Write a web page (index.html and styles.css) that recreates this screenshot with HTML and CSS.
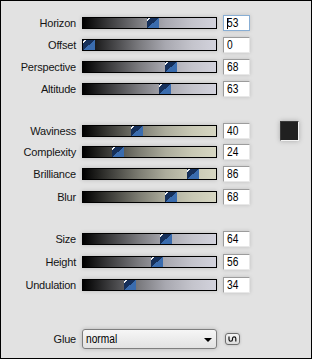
FILE: index.html
```html
<!DOCTYPE html>
<html>
<head>
<meta charset="utf-8">
<link rel="stylesheet" href="styles.css">
</head>
<body>
<div class="panel">
  <div class="group g1">
    <div class="row">
      <span class="lbl">Horizon</span>
      <div class="bar cool"><span class="thumb" style="left:64px"></span></div>
      <div class="field focus"><span class="caret"></span><span class="num">53</span></div>
    </div>
    <div class="row">
      <span class="lbl">Offset</span>
      <div class="bar cool"><span class="thumb" style="left:0px"></span></div>
      <div class="field"><span class="num">0</span></div>
    </div>
    <div class="row">
      <span class="lbl">Perspective</span>
      <div class="bar cool"><span class="thumb" style="left:82px"></span></div>
      <div class="field"><span class="num">68</span></div>
    </div>
    <div class="row">
      <span class="lbl">Altitude</span>
      <div class="bar cool"><span class="thumb" style="left:76px"></span></div>
      <div class="field"><span class="num">63</span></div>
    </div>
  </div>

  <div class="group g2">
    <div class="row">
      <span class="lbl">Waviness</span>
      <div class="bar warm"><span class="thumb" style="left:48px"></span></div>
      <div class="field"><span class="num">40</span></div>
      <div class="swatch"></div>
    </div>
    <div class="row">
      <span class="lbl">Complexity</span>
      <div class="bar warm"><span class="thumb" style="left:29px"></span></div>
      <div class="field"><span class="num">24</span></div>
    </div>
    <div class="row">
      <span class="lbl">Brilliance</span>
      <div class="bar warm"><span class="thumb" style="left:104px"></span></div>
      <div class="field"><span class="num">86</span></div>
    </div>
    <div class="row">
      <span class="lbl">Blur</span>
      <div class="bar warm"><span class="thumb" style="left:82px"></span></div>
      <div class="field"><span class="num">68</span></div>
    </div>
  </div>

  <div class="group g3">
    <div class="row">
      <span class="lbl">Size</span>
      <div class="bar cool"><span class="thumb" style="left:77px"></span></div>
      <div class="field"><span class="num">64</span></div>
    </div>
    <div class="row">
      <span class="lbl">Height</span>
      <div class="bar cool"><span class="thumb" style="left:68px"></span></div>
      <div class="field"><span class="num">56</span></div>
    </div>
    <div class="row">
      <span class="lbl">Undulation</span>
      <div class="bar cool"><span class="thumb" style="left:41px"></span></div>
      <div class="field"><span class="num">34</span></div>
    </div>
  </div>

  <div class="glue">
    <span class="lbl">Glue</span>
    <div class="select"><span class="sel-text">normal</span><span class="arrow"></span></div>
    <div class="sbtn">
      <svg width="9" height="6" viewBox="0 0 9 6"><path d="M1 0.5 V3.5 A1.5 1.5 0 0 0 4.5 3.5 V2.5 A1.5 1.5 0 0 1 7.8 2.5 V5.5" fill="none" stroke="#111" stroke-width="1.2"/></svg>
    </div>
  </div>
</div>
</body>
</html>
```

FILE: styles.css
```css
* { box-sizing: border-box; }
html, body { margin: 0; padding: 0; }
body {
  width: 312px;
  height: 359px;
  font-family: "Liberation Sans", Arial, sans-serif;
  color: #1e1e1e;
}
.panel {
  width: 312px;
  height: 359px;
  border: 1px solid #000;
  background: #e2e2e2;
  padding-top: 14px;
  display: flex;
  flex-direction: column;
}
.group {
  display: flex;
  flex-direction: column;
  gap: 6px;
}
.g2 { margin-top: 24px; gap: 6.67px; }
.g3 { margin-top: 26px; gap: 7px; }
.row, .glue {
  display: grid;
  grid-template-columns: 75px 135px 27px auto;
  column-gap: 6px;
  align-items: center;
  height: 16px;
}
.lbl {
  text-align: right;
  font-size: 11px;
  letter-spacing: -0.2px;
  line-height: 16px;
  white-space: nowrap;
  color: #141414;
}
.bar {
  position: relative;
  height: 12px;
  border: 1px solid #000;
  box-shadow: 0 0 4px rgba(0,0,0,0.18);
}
.cool {
  background: linear-gradient(to right, #000 0%, #3c3c3e 20%, #7a7a7e 42%, #a8a8b0 62%, #c4c4cc 82%, #d2d2dc 100%);
}
.warm {
  background: linear-gradient(to right, #000 0%, #3c3c38 20%, #7c7c72 42%, #acac9c 62%, #c8c8b4 82%, #d6d6c2 100%);
}
.thumb {
  position: absolute;
  top: 0;
  width: 12px;
  height: 10px;
  background:
    linear-gradient(135deg, transparent 0 1px, #f2f2f2 1px 2.5px, transparent 2.5px) 0 0 / 6px 5px no-repeat,
    linear-gradient(to bottom right, #16305a 0 50%, #3a6cae 50% 100%);
}
.field {
  position: relative;
  height: 16px;
  background: #fff;
  border: 1px solid;
  border-color: #9c9c9c #e8e8e8 #e8e8e8 #9c9c9c;
  font-size: 12px;
  line-height: 14px;
  padding-left: 3px;
  color: #000;
  box-shadow: 0 0 4px rgba(0,0,0,0.15);
}
.num, .sel-text {
  display: inline-block;
  transform: scaleX(0.85);
  transform-origin: left center;
}
.field.focus {
  border-color: #88aed4;
}
.caret {
  position: absolute;
  left: 3px;
  top: 2px;
  width: 1px;
  height: 11px;
  background: #000;
}
.swatch {
  width: 19px;
  height: 20px;
  margin-left: 24px;
  background: #202020;
  border: 1px solid;
  border-color: #3a3a3a #f4f4f4 #f4f4f4 #3a3a3a;
  box-shadow: 0 0 5px rgba(0,0,0,0.25);
}
.glue {
  margin-top: auto;
  margin-bottom: 9px;
  height: 20px;
  grid-template-columns: 75px 135px 15px;
  column-gap: 6px 8px;
}
.glue .lbl { line-height: 20px; }
.select {
  position: relative;
  height: 20px;
  border: 1px solid #7e7e7e;
  border-radius: 3px;
  background: linear-gradient(#f6f6f6, #ececec 50%, #e2e2e2 100%);
  box-shadow: 0 0 4px rgba(0,0,0,0.2);
  font-size: 12px;
  line-height: 18px;
  padding-left: 3px;
  color: #000;
}
.arrow {
  position: absolute;
  right: 4px;
  top: 8px;
  width: 0;
  height: 0;
  border-left: 4px solid transparent;
  border-right: 4px solid transparent;
  border-top: 4px solid #000;
}
.sbtn {
  margin-left: 2px;
  width: 15px;
  height: 12px;
  border: 1px solid #6e6e6e;
  border-radius: 3px;
  background: linear-gradient(#f4f4f4, #dcdcdc);
  display: flex;
  align-items: center;
  justify-content: center;
  box-shadow: 0 0 3px rgba(0,0,0,0.2);
}
```
